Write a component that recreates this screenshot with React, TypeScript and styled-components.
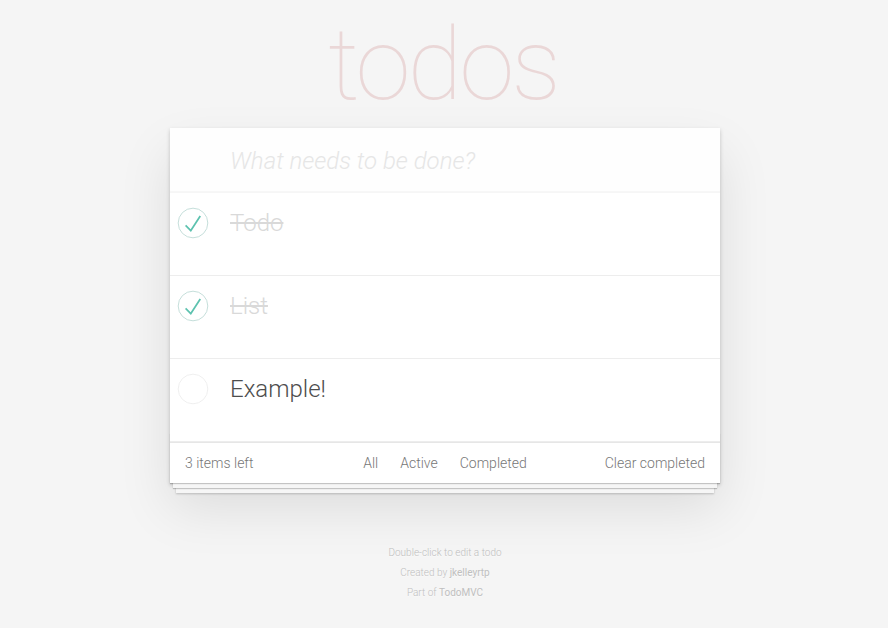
import styled, { createGlobalStyle } from "styled-components";

const GlobalStyle = createGlobalStyle`
  html, body {
    margin: 0;
    padding: 0;
  }
  body {
    background: #f5f5f5;
    color: #4d4d4d;
    font: 14px "Helvetica Neue", Roboto, "Liberation Sans", Arial, sans-serif;
    font-weight: 300;
    line-height: 1.4em;
    -webkit-font-smoothing: antialiased;
  }
  * {
    box-sizing: border-box;
  }
`;

const Root = styled.div`
  padding-left: 2px;
`;

const Page = styled.div`
  width: 550px;
  margin: 0 auto;
`;

const Title = styled.h1`
  margin: 0 0 13px;
  padding: 15px 4px 0 0;
  font-size: 100px;
  line-height: 100px;
  font-weight: 100;
  letter-spacing: -3px;
  text-align: center;
  color: rgba(175, 47, 47, 0.15);
  text-rendering: optimizeLegibility;
`;

const Card = styled.section`
  position: relative;
  background: #fff;
  box-shadow: 0 2px 4px 0 rgba(0, 0, 0, 0.2), 0 25px 50px 0 rgba(0, 0, 0, 0.1);
`;

const NewTodo = styled.input`
  display: block;
  width: 100%;
  height: 65px;
  margin: 0;
  padding: 16px 16px 16px 60px;
  border: none;
  outline: none;
  background: rgba(0, 0, 0, 0.003);
  box-shadow: inset 0 -2px 1px rgba(0, 0, 0, 0.03);
  font-family: inherit;
  font-size: 24px;
  font-weight: 300;
  line-height: 1.4em;
  color: inherit;

  &::placeholder {
    font-style: italic;
    font-weight: 300;
    color: #e6e6e6;
  }
`;

const List = styled.ul`
  margin: 0;
  padding: 0;
  list-style: none;
`;

const Row = styled.li`
  display: flex;
  align-items: flex-start;
  height: 83px;
  border-bottom: 1px solid #ededed;
  font-size: 24px;
`;

const Toggle = styled.span`
  flex: none;
  width: 40px;
  height: 40px;
  margin: 10px 0 0 3px;
`;

const Label = styled.label<{ $done: boolean }>`
  display: block;
  padding: 16px 15px 14px 17px;
  line-height: 1.2;
  word-break: break-all;
  color: ${(p) => (p.$done ? "#d9d9d9" : "#4d4d4d")};
  text-decoration: ${(p) => (p.$done ? "line-through" : "none")};
`;

const Footer = styled.footer`
  position: relative;
  display: grid;
  grid-template-columns: 1fr auto 1fr;
  align-items: center;
  height: 41px;
  padding: 10px 15px;
  color: #777;
  border-top: 1px solid #e6e6e6;

  &::before {
    content: "";
    position: absolute;
    right: 0;
    bottom: 0;
    left: 0;
    height: 50px;
    overflow: hidden;
    box-shadow: 0 1px 1px rgba(0, 0, 0, 0.2), 0 8px 0 -3px #f6f6f6,
      0 9px 1px -3px rgba(0, 0, 0, 0.2), 0 16px 0 -6px #f6f6f6,
      0 17px 2px -6px rgba(0, 0, 0, 0.2);
    pointer-events: none;
  }
`;

const Count = styled.span`
  line-height: 20px;
  text-align: left;
`;

const Filters = styled.ul`
  display: flex;
  margin: 0;
  padding: 0;
  list-style: none;
`;

const FilterLink = styled.a<{ $selected?: boolean }>`
  display: block;
  margin: -4px 3px;
  padding: 3px 7px;
  line-height: 20px;
  color: inherit;
  text-decoration: none;
  border: 1px solid ${(p) => (p.$selected ? "rgba(175, 47, 47, 0.2)" : "transparent")};
  border-radius: 3px;
`;

const ClearButton = styled.button`
  justify-self: end;
  margin: 0;
  padding: 0;
  border: none;
  background: none;
  font: inherit;
  color: inherit;
  line-height: 20px;
  cursor: pointer;
`;

const Info = styled.footer`
  margin: 65px auto 0;
  color: #bfbfbf;
  font-size: 10px;
  text-shadow: 0 1px 0 rgba(255, 255, 255, 0.5);
  text-align: center;

  p {
    margin: 10px 0;
    line-height: 1;
  }

  a {
    color: inherit;
    text-decoration: none;
    font-weight: 400;
  }
`;

const CheckIcon = ({ done }: { done: boolean }) => (
  <svg width="40" height="40" viewBox="-17.5 -17.5 135 135">
    <circle cx="50" cy="50" r="50" fill="none" stroke={done ? "#bddad5" : "#ededed"} strokeWidth="3" />
    {done && <path fill="#5dc2af" d="M72 25L42 71 27 56l-4 4 20 20 34-52z" />}
  </svg>
);

const todos = [
  { id: 1, title: "Todo", done: true },
  { id: 2, title: "List", done: true },
  { id: 3, title: "Example!", done: false },
];

export default function App() {
  const left = todos.length;

  return (
    <Root>
      <GlobalStyle />
      <Page>
        <Title>todos</Title>
        <Card>
          <NewTodo placeholder="What needs to be done?" />
          <List>
            {todos.map((todo) => (
              <Row key={todo.id}>
                <Toggle>
                  <CheckIcon done={todo.done} />
                </Toggle>
                <Label $done={todo.done}>{todo.title}</Label>
              </Row>
            ))}
          </List>
          <Footer>
            <Count>{left} items left</Count>
            <Filters>
              <li><FilterLink href="#/">All</FilterLink></li>
              <li><FilterLink href="#/active">Active</FilterLink></li>
              <li><FilterLink href="#/completed">Completed</FilterLink></li>
            </Filters>
            <ClearButton>Clear completed</ClearButton>
          </Footer>
        </Card>
        <Info>
          <p>Double-click to edit a todo</p>
          <p>Created by <a href="#">jkelleyrtp</a></p>
          <p>Part of <a href="#">TodoMVC</a></p>
        </Info>
      </Page>
    </Root>
  );
}
